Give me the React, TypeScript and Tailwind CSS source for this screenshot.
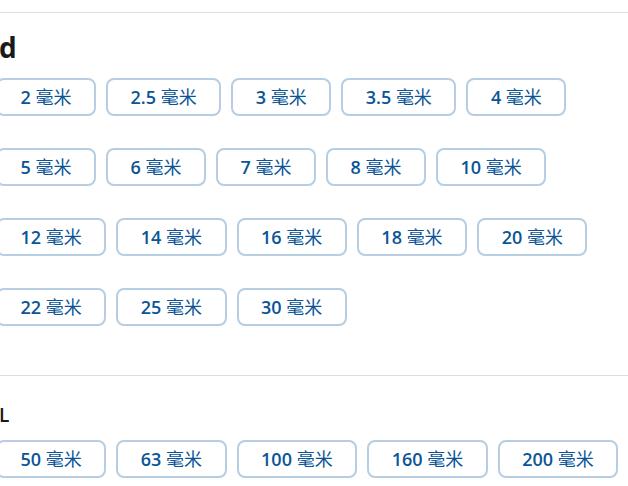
const groups = [
  {
    title: "d",
    heading: "text-[28px] font-bold mt-[13px] mb-[10px]",
    sizes: ["2", "2.5", "3", "3.5", "4", "5", "6", "7", "8", "10", "12", "14", "16", "18", "20", "22", "25", "30"],
  },
  {
    title: "L",
    heading: "text-[19px] font-semibold mt-[25px] mb-[10px]",
    sizes: ["50", "63", "100", "160", "200"],
  },
];

const SizeButton = ({ value }: { value: string }) => {
  return (
    <button className="h-[38px] px-[22.5px] rounded-[8px] border-2 border-[#b6cde2] bg-white text-[18px] font-semibold text-[#0b5597] leading-none whitespace-nowrap">
      {value} <span className="font-normal">毫米</span>
    </button>
  );
};

const App = () => {
  return (
    <div
      className="w-[628px] h-[486px] overflow-hidden bg-white"
      style={{ fontFamily: '"Open Sans", "Noto Sans CJK SC", sans-serif' }}
    >
      <div className="pt-[12px]">
        {groups.map((g, i) => (
          <section key={g.title} className={i === 0 ? "border-t border-[#d9dfe7]" : "mt-[49px] border-t border-[#d9dfe7]"}>
            <h2 className={`ml-[-1px] text-[#1a1a1a] ${g.heading}`}>{g.title}</h2>
            <div className="ml-[-4px] w-[628px] flex flex-wrap gap-x-[10px] gap-y-[32px]">
              {g.sizes.map((s) => (
                <SizeButton key={s} value={s} />
              ))}
            </div>
          </section>
        ))}
      </div>
    </div>
  );
};

export default App;
